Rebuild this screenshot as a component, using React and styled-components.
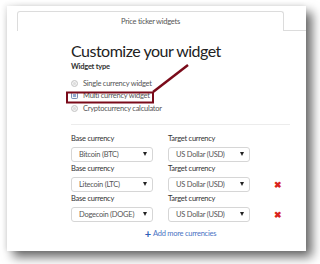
import React from 'react'
import styled, { createGlobalStyle } from 'styled-components'

const GlobalStyle = createGlobalStyle`
  html, body {
    margin: 0;
    background: #fff;
    font-family: Lato, "Open Sans", sans-serif;
  }
`

const Page = styled.div`
  padding: 6px 0 0 7px;
  width: 320px;
  height: 264px;
  box-sizing: border-box;
  overflow: hidden;
`

const Card = styled.div`
  position: relative;
  width: 299px;
  height: 245px;
  background: #fff;
  box-shadow: 6px 6px 10px rgba(0, 0, 0, 0.6), -2px -1px 5px rgba(0, 0, 0, 0.08);
`

const TabBar = styled.div`
  display: flex;
  padding: 5px 0 0 10px;
`

const Tab = styled.div`
  width: 267px;
  height: 20px;
  box-sizing: border-box;
  border: 1px solid #dcdcdc;
  border-bottom: none;
  border-radius: 3px 3px 0 0;
  display: flex;
  align-items: center;
  justify-content: center;
  font-size: 7.5px;
  letter-spacing: -0.25px;
  color: #555;
`

const TabFill = styled.div`
  flex: 1;
  border-bottom: 1px solid #dcdcdc;
`

const Content = styled.div`
  padding: 10px 16px 0 64px;
  letter-spacing: -0.25px;
`

const Title = styled.h1`
  margin: 0;
  font-size: 16px;
  line-height: 20px;
  font-weight: 400;
  letter-spacing: -0.5px;
  color: #222;
`

const SectionLabel = styled.div`
  margin-top: 1px;
  font-size: 7.5px;
  line-height: 10px;
  font-weight: 700;
  color: #333;
`

const RadioList = styled.div`
  margin-top: 5px;
  display: flex;
  flex-direction: column;
`

const RadioRow = styled.label`
  display: flex;
  align-items: center;
  gap: 5px;
  height: 12.5px;
  font-size: 7.5px;
  color: #555;
`

const RadioDot = styled.span`
  width: 5px;
  height: 5px;
  border-radius: ${p => (p.checked ? '1.5px' : '50%')};
  background: ${p => (p.checked ? '#8fa6cf' : '#ddd')};
  border: 1px solid ${p => (p.checked ? '#7b8fb5' : '#c8c8c8')};
  box-shadow: inset 0 0 0 1px #f4f4f4;
`

const Rule = styled.div`
  margin-top: 9px;
  border-top: 1px solid #ececec;
`

const CurrencyGrid = styled.div`
  margin-top: 9px;
  display: grid;
  grid-template-columns: 82px 82px 1fr;
  column-gap: 15px;
`

const Field = styled.div`
  display: flex;
  flex-direction: column;
  padding-bottom: 2px;
`

const FieldLabel = styled.div`
  font-size: 7.5px;
  line-height: 10px;
  color: #333;
  margin-bottom: 3px;
`

const Select = styled.div`
  height: 15px;
  box-sizing: border-box;
  border: 1px solid #d6d6d6;
  border-radius: 3px;
  display: flex;
  align-items: center;
  justify-content: space-between;
  padding: 0 5px 0 7px;
  font-size: 7.5px;
  color: #555;
`

const Caret = styled.span`
  width: 0;
  height: 0;
  border-left: 2.5px solid transparent;
  border-right: 2.5px solid transparent;
  border-top: 4px solid #222;
`

const RemoveCell = styled.div`
  display: flex;
  align-items: flex-end;
  justify-content: center;
  padding: 0 0 5px 0;
  color: #d9251d;
  font-size: 9px;
  font-weight: 700;
  line-height: 9px;
`

const AddMore = styled.div`
  margin-top: 5px;
  display: flex;
  justify-content: center;
  align-items: center;
  gap: 2px;
  font-size: 7.5px;
  line-height: 10px;
  color: #4a73c4;
`

const PlusSign = styled.span`
  font-size: 11px;
  font-weight: 700;
  color: #2f5fb8;
  line-height: 10px;
`

const Annotation = styled.svg`
  position: absolute;
  left: 0;
  top: 0;
  pointer-events: none;
`

const rows = [
  { base: 'Bitcoin (BTC)', target: 'US Dollar (USD)', removable: false },
  { base: 'Litecoin (LTC)', target: 'US Dollar (USD)', removable: true },
  { base: 'Dogecoin (DOGE)', target: 'US Dollar (USD)', removable: true },
]

const types = [
  { label: 'Single currency widget', checked: false },
  { label: 'Multi currency widget', checked: true },
  { label: 'Cryptocurrency calculator', checked: false },
]

export default function App() {
  return (
    <Page>
      <GlobalStyle />
      <Card>
        <TabBar>
          <Tab>Price ticker widgets</Tab>
          <TabFill />
        </TabBar>
        <Content>
          <Title>Customize your widget</Title>
          <SectionLabel>Widget type</SectionLabel>
          <RadioList>
            {types.map(t => (
              <RadioRow key={t.label}>
                <RadioDot checked={t.checked} />
                {t.label}
              </RadioRow>
            ))}
          </RadioList>
          <Rule />
          <CurrencyGrid>
            {rows.map((r, i) => (
              <React.Fragment key={i}>
                <Field>
                  <FieldLabel>Base currency</FieldLabel>
                  <Select>
                    {r.base}
                    <Caret />
                  </Select>
                </Field>
                <Field>
                  <FieldLabel>Target currency</FieldLabel>
                  <Select>
                    {r.target}
                    <Caret />
                  </Select>
                </Field>
                <RemoveCell>{r.removable ? '✖' : ''}</RemoveCell>
              </React.Fragment>
            ))}
          </CurrencyGrid>
          <AddMore>
            <PlusSign>+</PlusSign>
            Add more currencies
          </AddMore>
        </Content>
        <Annotation width="299" height="245" viewBox="0 0 299 245">
          <rect x="60" y="86.5" width="86" height="10" fill="none" stroke="#7a0b1a" strokeWidth="2" />
          <line x1="146" y1="86" x2="181" y2="59" stroke="#7a0b1a" strokeWidth="2.5" />
        </Annotation>
      </Card>
    </Page>
  )
}
